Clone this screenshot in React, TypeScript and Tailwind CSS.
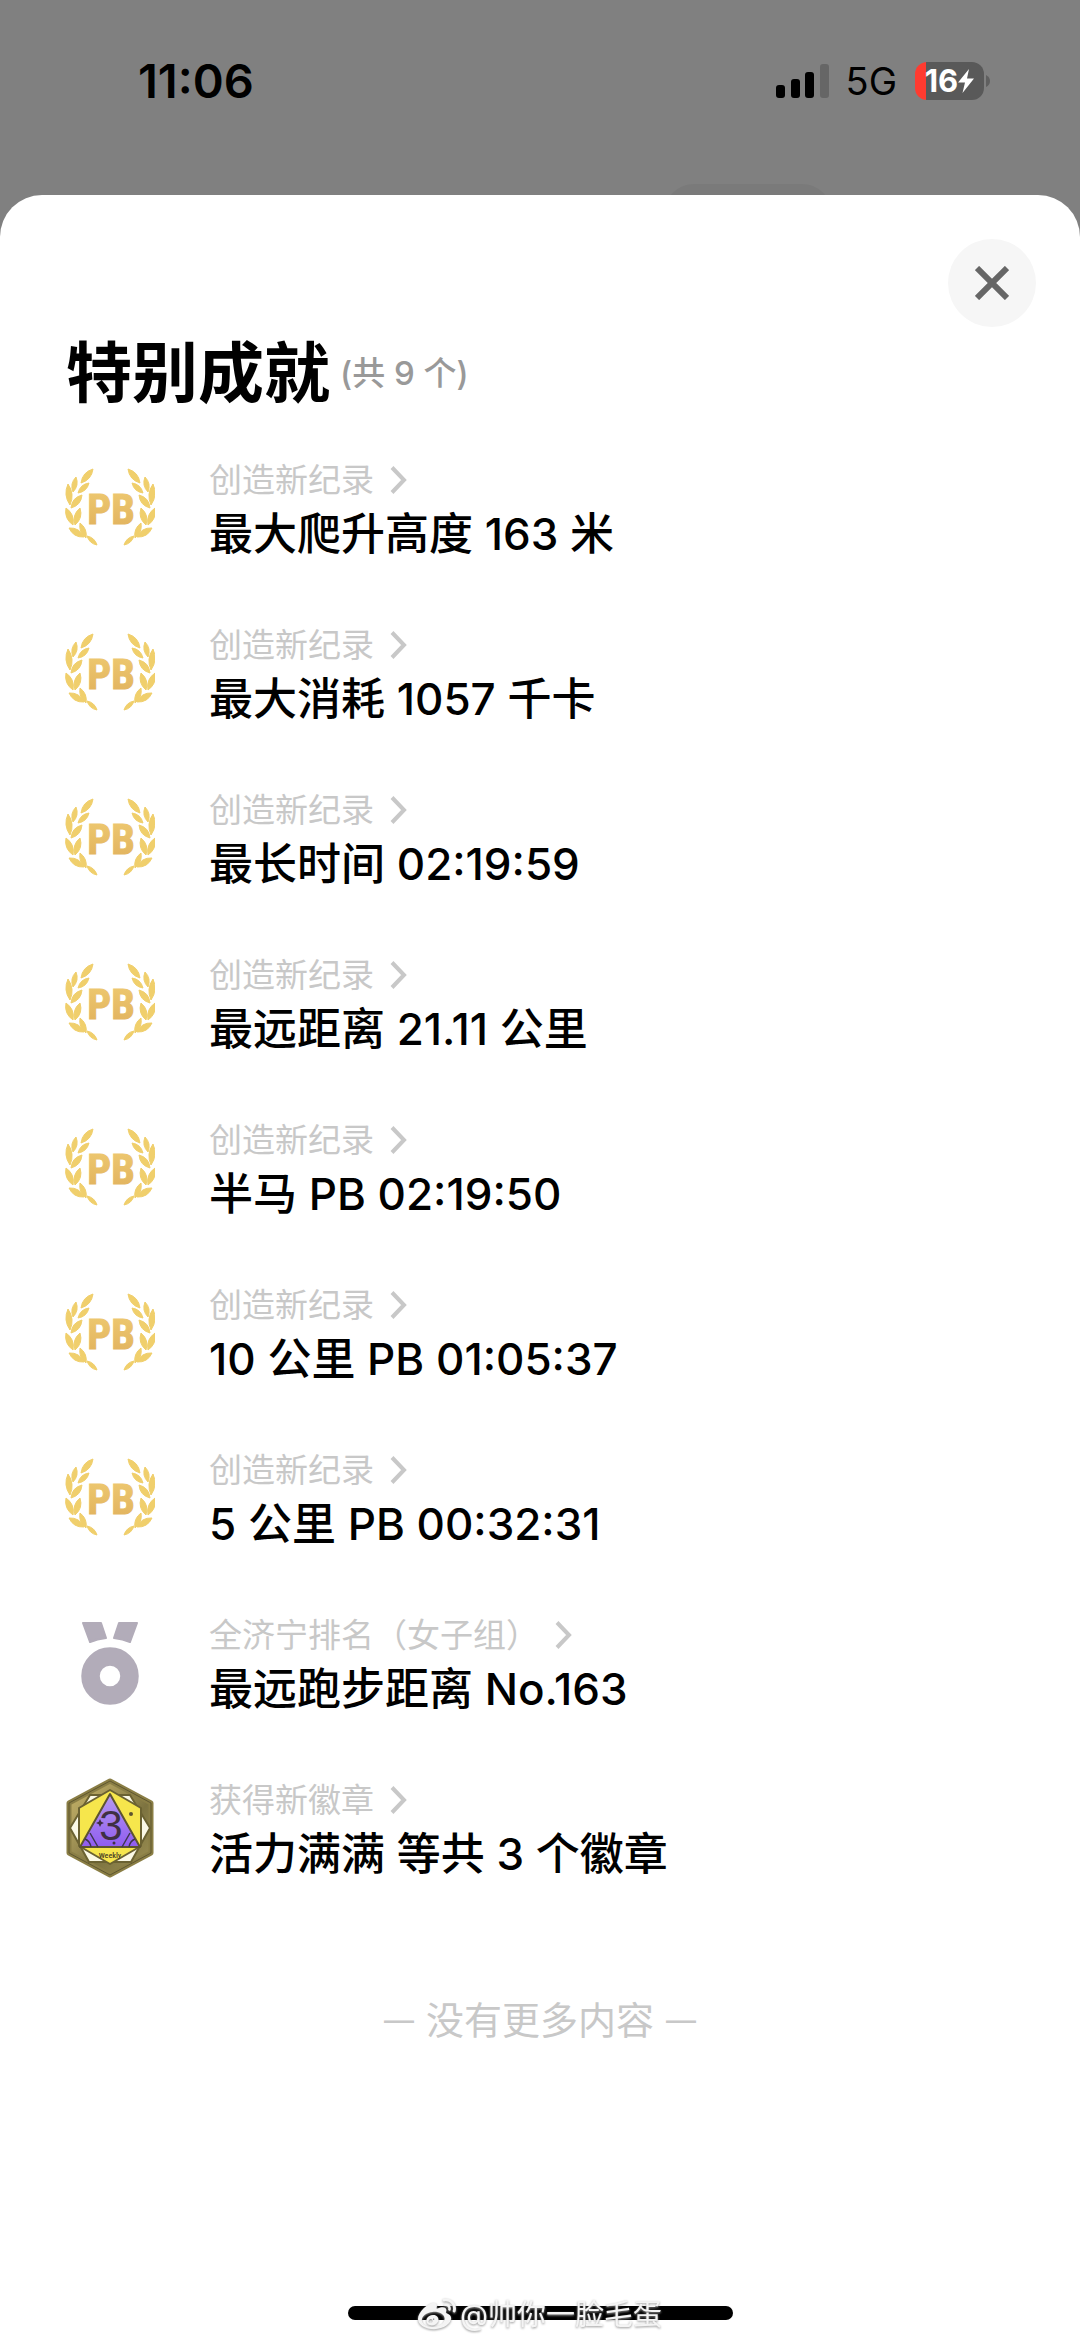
import React from "react";
import { FaWeibo } from "react-icons/fa";

type IconKind = "pb" | "medal" | "badge";

type Achievement = {
	icon: IconKind;
	label: string;
	title: string;
};

const achievements: Achievement[] = [
	{ icon: "pb", label: "创造新纪录", title: "最大爬升高度 163 米" },
	{ icon: "pb", label: "创造新纪录", title: "最大消耗 1057 千卡" },
	{ icon: "pb", label: "创造新纪录", title: "最长时间 02:19:59" },
	{ icon: "pb", label: "创造新纪录", title: "最远距离 21.11 公里" },
	{ icon: "pb", label: "创造新纪录", title: "半马 PB 02:19:50" },
	{ icon: "pb", label: "创造新纪录", title: "10 公里 PB 01:05:37" },
	{ icon: "pb", label: "创造新纪录", title: "5 公里 PB 00:32:31" },
	{ icon: "medal", label: "全济宁排名（女子组）", title: "最远跑步距离 No.163" },
	{ icon: "badge", label: "获得新徽章", title: "活力满满 等共 3 个徽章" },
];

// each leaf: tip x, tip y, base x, base y, bulge
const leaves = [
	[28, 13, 16, 27, 6],
	[24, 27, 13, 37, 5],
	[11, 21, 8, 36, 5],
	[3, 28, 5, 49, 6],
	[17, 39, 6, 52, 6],
	[15, 52, 10, 69, 6],
	[1, 52, 8, 69, 6],
	[15, 67, 21, 82, 5],
	[4, 72, 19, 81, 6],
	[22, 80, 32, 89, 4],
];

const leafPath = ([x1, y1, x2, y2, w]: number[]) => {
	const len = Math.hypot(x2 - x1, y2 - y1);
	const nx = (-(y2 - y1) / len) * w;
	const ny = ((x2 - x1) / len) * w;
	const mx = (x1 + x2) / 2;
	const my = (y1 + y2) / 2;
	return `M${x1} ${y1}Q${mx + nx} ${my + ny} ${x2} ${y2}Q${mx - nx} ${my - ny} ${x1} ${y1}Z`;
};

const Laurel = () => (
	<>
		{leaves.map((leaf) => (
			<path key={leaf.join()} d={leafPath(leaf)} />
		))}
	</>
);

const PbIcon = () => (
	<svg viewBox="0 0 90 102" className="w-full h-full" aria-hidden="true">
		<defs>
			<linearGradient id="gold" x1="0" y1="0" x2="0" y2="1">
				<stop offset="0" stopColor="#efcb72" />
				<stop offset="1" stopColor="#e0b05c" />
			</linearGradient>
		</defs>
		<g fill="#f0cf6c" stroke="#f0cf6c" strokeWidth="1" strokeLinejoin="round">
			<Laurel />
			<g transform="translate(91 0) scale(-1 1)">
				<Laurel />
			</g>
		</g>
		<text
			x="46"
			y="68"
			textAnchor="middle"
			fill="url(#gold)"
			stroke="url(#gold)"
			strokeWidth="1"
			className="text-[42px] font-bold font-['Liberation_Sans_Narrow','Roboto_Condensed','DejaVu_Sans_Condensed',sans-serif]"
		>
			PB
		</text>
	</svg>
);

const MedalIcon = () => (
	<svg viewBox="0 0 90 102" className="w-full h-full" aria-hidden="true">
		<g fill="#b2acb9" stroke="#b2acb9" strokeWidth="2" strokeLinejoin="round">
			<path d="M18 12H36L41 27Q32 28 25 31Z" />
			<path d="M72 12H54L49 27Q58 28 65 31Z" />
		</g>
		<circle cx="45" cy="65" r="19.5" fill="none" stroke="#b2acb9" strokeWidth="18.5" />
	</svg>
);

const BadgeIcon = () => (
	<svg viewBox="0 0 90 102" className="w-full h-full" aria-hidden="true">
		<defs>
			<linearGradient id="bronze" x1="0" y1="0" x2="1" y2="1">
				<stop offset="0" stopColor="#c9b568" />
				<stop offset="0.3" stopColor="#a8995a" />
				<stop offset="0.6" stopColor="#7d7340" />
				<stop offset="1" stopColor="#a09355" />
			</linearGradient>
			<linearGradient id="violet" x1="0" y1="0" x2="0" y2="1">
				<stop offset="0" stopColor="#b79bf0" />
				<stop offset="1" stopColor="#8f5cf0" />
			</linearGradient>
		</defs>
		<g strokeLinejoin="round">
			<path d="M45 5L86 27V77L45 99L4 77V27Z" fill="url(#bronze)" stroke="#8a7e45" strokeWidth="5" />
			<path d="M45 5L86 27V77L45 99L4 77V27Z" fill="none" stroke="#5f5730" strokeWidth="1" />
			<path d="M25 19H65L85 52L66 86H24L5 52Z" fill="#fbf9e6" stroke="#6b6232" strokeWidth="2" />
			<path d="M45 14L76 32V70L45 88L14 70V32Z" fill="#f6e64c" stroke="#6b6232" strokeWidth="2" />
			<path d="M45 18L75 71H15Z" fill="url(#violet)" stroke="#5d5430" strokeWidth="2" />
		</g>
		<g fill="none" stroke="#3f3550" strokeWidth="1.5">
			<path d="M20 63Q25 65 26 71M25 57Q29 64 33 71M70 63Q65 65 64 71M65 57Q61 64 57 71" />
		</g>
		<text x="46" y="64" textAnchor="middle" fill="#3f3044" className="text-[42px] font-['Liberation_Sans',sans-serif]">
			3
		</text>
		<path d="M35 43L36.3 45.7L39 47L36.3 48.3L35 51L33.7 48.3L31 47L33.7 45.7Z" fill="#3f3044" />
		<circle cx="66" cy="38" r="2" fill="#5d5430" />
		<circle cx="49" cy="67" r="1.5" fill="#3f3044" />
		<text
			x="45"
			y="82"
			textAnchor="middle"
			fill="#4d4526"
			className="text-[8px] font-medium font-['Liberation_Sans_Narrow','Roboto_Condensed',sans-serif]"
		>
			Weekly
		</text>
	</svg>
);

const icons: Record<IconKind, () => React.ReactElement> = {
	pb: PbIcon,
	medal: MedalIcon,
	badge: BadgeIcon,
};

const StatusBar = () => (
	<header className="flex h-[195px] items-start justify-between pt-[51px] pl-[138px] pr-[90px] text-black">
		<time className="text-[47px] leading-[60px] font-semibold">11:06</time>
		<div className="flex h-[60px] items-center">
			<svg viewBox="0 0 54 34" className="w-[54px] h-[34px]" aria-label="信号">
				<rect x="0" y="21" width="9" height="13" rx="3" />
				<rect x="15" y="15" width="9" height="19" rx="3" />
				<rect x="29" y="8" width="9" height="26" rx="3" />
				<rect x="44" y="0" width="9" height="34" rx="3" fill="#666666" />
			</svg>
			<span className="ml-4 text-[38px] leading-[60px]">5G</span>
			<div className="ml-[18px] flex items-center gap-[2px]">
				<div className="flex h-[38px] w-[69px] items-center justify-center rounded-[12px] bg-[linear-gradient(to_right,#ff3b30_11px,#595959_11px)] text-white">
					<span className="text-[31px] leading-[38px] font-bold">16</span>
					<svg viewBox="0 0 16 24" className="w-4 h-6" fill="currentColor" aria-hidden="true">
						<path d="M11 0L0 13.5H7L4.5 24L16 9.5H9Z" />
					</svg>
				</div>
				<svg viewBox="0 0 4 12" className="w-1 h-3" fill="#5f5f5f" aria-hidden="true">
					<path d="M0 0Q4 2 4 6Q4 10 0 12Z" />
				</svg>
			</div>
		</div>
	</header>
);

const AchievementRow = ({ icon, label, title }: Achievement) => {
	const Icon = icons[icon];
	return (
		<li>
			<a href="#" className="flex items-start gap-[54px]">
				<div className="h-[102px] w-[90px] shrink-0">
					<Icon />
				</div>
				<div className="flex-1">
					<div className="flex items-center gap-4 text-[33px] leading-[48px] text-[#c8c8c8]">
						<span>{label}</span>
						<svg viewBox="0 0 17 28" className="w-[17px] h-7" fill="none" stroke="currentColor" strokeWidth="4" aria-hidden="true">
							<path d="M2 1.5L14 14L2 26.5" />
						</svg>
					</div>
					<p className="text-[44px] leading-[60px] font-medium text-black">{title}</p>
				</div>
			</a>
		</li>
	);
};

const App = () => {
	return (
		<div className="relative flex min-h-screen flex-col overflow-hidden bg-[#808080] font-['Inter','Noto_Sans_CJK_SC',sans-serif]">
			{/* dimmed pill of the page underneath */}
			<div className="absolute top-[184px] left-[664px] h-[60px] w-[168px] rounded-full bg-[#7a7a7a]" />
			<StatusBar />
			<main className="relative flex flex-1 flex-col rounded-t-[42px] bg-white pb-[22px]">
				<div className="flex justify-end pt-11 pr-11">
					<button
						type="button"
						aria-label="关闭"
						className="flex h-[88px] w-[88px] items-center justify-center rounded-full bg-[#f6f6f6] text-[#666666]"
					>
						<svg viewBox="0 0 34 34" className="w-[34px] h-[34px]" fill="none" stroke="currentColor" strokeWidth="6">
							<path d="M2 2L32 32M32 2L2 32" />
						</svg>
					</button>
				</div>
				<div className="mt-[10px] flex items-center gap-[10px] px-[66px]">
					<h1 className="text-[66px] leading-[72px] font-bold text-black">特别成就</h1>
					<span className="text-[33px] leading-[48px] font-medium text-[#999999]">(共 9 个)</span>
				</div>
				<ul className="mt-[47px] flex flex-col gap-[57px] px-[65px]">
					{achievements.map((item) => (
						<AchievementRow key={item.title} {...item} />
					))}
				</ul>
				<p className="mt-28 mb-16 flex items-center justify-center gap-3 text-[38px] leading-[48px] text-[#c8c8c8]">
					<span className="text-[30px]">—</span>
					没有更多内容
					<span className="text-[30px]">—</span>
				</p>
				<div className="relative mt-auto flex justify-center">
					<div className="h-[14px] w-[385px] rounded-full bg-black" />
					<div className="absolute inset-0 flex items-center justify-center gap-1 pt-1 text-[#f4f4f4] [filter:drop-shadow(0_1px_1px_#999)]">
						<FaWeibo className="h-[38px] w-[38px]" aria-hidden="true" />
						<span className="text-[29px] leading-[36px] whitespace-nowrap">@帅你一脸毛蛋</span>
					</div>
				</div>
			</main>
		</div>
	);
};

export default App;
